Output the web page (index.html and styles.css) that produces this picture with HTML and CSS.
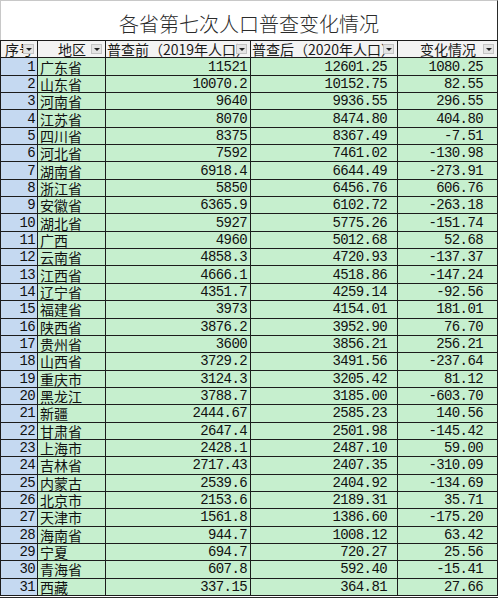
FILE: index.html
```html
<!DOCTYPE html>
<html lang="zh-CN">
<head>
<meta charset="utf-8">
<title>各省第七次人口普查变化情况</title>
<link rel="stylesheet" href="styles.css">
</head>
<body>
<div class="sheet">
  <div class="title">各省第七次人口普查变化情况</div>
  <div class="grid">
    <div class="hd c0 clip">序号<span class="dd"></span></div>
    <div class="hd c1 center">地区<span class="dd"></span></div>
    <div class="hd c2 clip">普查前（2019年人口）<span class="dd"></span></div>
    <div class="hd c3 clip">普查后（2020年人口）<span class="dd"></span></div>
    <div class="hd c4 center">变化情况<span class="dd"></span></div>

    <div class="c0">1</div><div class="c1">广东省</div><div class="c2">11521</div><div class="c3">12601.25</div><div class="c4">1080.25</div>
    <div class="c0">2</div><div class="c1">山东省</div><div class="c2">10070.2</div><div class="c3">10152.75</div><div class="c4">82.55</div>
    <div class="c0">3</div><div class="c1">河南省</div><div class="c2">9640</div><div class="c3">9936.55</div><div class="c4">296.55</div>
    <div class="c0">4</div><div class="c1">江苏省</div><div class="c2">8070</div><div class="c3">8474.80</div><div class="c4">404.80</div>
    <div class="c0">5</div><div class="c1">四川省</div><div class="c2">8375</div><div class="c3">8367.49</div><div class="c4">-7.51</div>
    <div class="c0">6</div><div class="c1">河北省</div><div class="c2">7592</div><div class="c3">7461.02</div><div class="c4">-130.98</div>
    <div class="c0">7</div><div class="c1">湖南省</div><div class="c2">6918.4</div><div class="c3">6644.49</div><div class="c4">-273.91</div>
    <div class="c0">8</div><div class="c1">浙江省</div><div class="c2">5850</div><div class="c3">6456.76</div><div class="c4">606.76</div>
    <div class="c0">9</div><div class="c1">安徽省</div><div class="c2">6365.9</div><div class="c3">6102.72</div><div class="c4">-263.18</div>
    <div class="c0">10</div><div class="c1">湖北省</div><div class="c2">5927</div><div class="c3">5775.26</div><div class="c4">-151.74</div>
    <div class="c0">11</div><div class="c1">广西</div><div class="c2">4960</div><div class="c3">5012.68</div><div class="c4">52.68</div>
    <div class="c0">12</div><div class="c1">云南省</div><div class="c2">4858.3</div><div class="c3">4720.93</div><div class="c4">-137.37</div>
    <div class="c0">13</div><div class="c1">江西省</div><div class="c2">4666.1</div><div class="c3">4518.86</div><div class="c4">-147.24</div>
    <div class="c0">14</div><div class="c1">辽宁省</div><div class="c2">4351.7</div><div class="c3">4259.14</div><div class="c4">-92.56</div>
    <div class="c0">15</div><div class="c1">福建省</div><div class="c2">3973</div><div class="c3">4154.01</div><div class="c4">181.01</div>
    <div class="c0">16</div><div class="c1">陕西省</div><div class="c2">3876.2</div><div class="c3">3952.90</div><div class="c4">76.70</div>
    <div class="c0">17</div><div class="c1">贵州省</div><div class="c2">3600</div><div class="c3">3856.21</div><div class="c4">256.21</div>
    <div class="c0">18</div><div class="c1">山西省</div><div class="c2">3729.2</div><div class="c3">3491.56</div><div class="c4">-237.64</div>
    <div class="c0">19</div><div class="c1">重庆市</div><div class="c2">3124.3</div><div class="c3">3205.42</div><div class="c4">81.12</div>
    <div class="c0">20</div><div class="c1">黑龙江</div><div class="c2">3788.7</div><div class="c3">3185.00</div><div class="c4">-603.70</div>
    <div class="c0">21</div><div class="c1">新疆</div><div class="c2">2444.67</div><div class="c3">2585.23</div><div class="c4">140.56</div>
    <div class="c0">22</div><div class="c1">甘肃省</div><div class="c2">2647.4</div><div class="c3">2501.98</div><div class="c4">-145.42</div>
    <div class="c0">23</div><div class="c1">上海市</div><div class="c2">2428.1</div><div class="c3">2487.10</div><div class="c4">59.00</div>
    <div class="c0">24</div><div class="c1">吉林省</div><div class="c2">2717.43</div><div class="c3">2407.35</div><div class="c4">-310.09</div>
    <div class="c0">25</div><div class="c1">内蒙古</div><div class="c2">2539.6</div><div class="c3">2404.92</div><div class="c4">-134.69</div>
    <div class="c0">26</div><div class="c1">北京市</div><div class="c2">2153.6</div><div class="c3">2189.31</div><div class="c4">35.71</div>
    <div class="c0">27</div><div class="c1">天津市</div><div class="c2">1561.8</div><div class="c3">1386.60</div><div class="c4">-175.20</div>
    <div class="c0">28</div><div class="c1">海南省</div><div class="c2">944.7</div><div class="c3">1008.12</div><div class="c4">63.42</div>
    <div class="c0">29</div><div class="c1">宁夏</div><div class="c2">694.7</div><div class="c3">720.27</div><div class="c4">25.56</div>
    <div class="c0">30</div><div class="c1">青海省</div><div class="c2">607.8</div><div class="c3">592.40</div><div class="c4">-15.41</div>
    <div class="c0">31</div><div class="c1">西藏</div><div class="c2">337.15</div><div class="c3">364.81</div><div class="c4">27.66</div>
  </div>
</div>
</body>
</html>
```
FILE: styles.css
```css
html, body {
  margin: 0;
  padding: 0;
  background: #ffffff;
}

body {
  font-family: "Noto Sans CJK SC", "Noto Sans", sans-serif;
  color: #151515;
}

.sheet {
  width: 498px;
  padding-bottom: 1px;
  border-bottom: 1px solid #2a2a2a;
}

.title {
  height: 40px;
  box-sizing: border-box;
  border-top: 1px solid #c8c8c8;
  border-left: 1px solid #c8c8c8;
  border-right: 1px solid #2a2a2a;
  display: flex;
  align-items: center;
  justify-content: center;
  padding-top: 6px;
  font-size: 20px;
  font-weight: 300;
  color: #2b2b2b;
}

.grid {
  display: grid;
  grid-template-columns: 36px 67px 144px 146px 99px;
  grid-template-rows: repeat(32, 1fr);
  gap: 1px;
  padding: 1px;
  height: 556px;
  box-sizing: border-box;
  background: #1c1c1c;
  font-size: 14px;
}

.grid > div {
  display: flex;
  align-items: center;
  justify-content: flex-end;
  min-width: 0;
  white-space: nowrap;
  line-height: 1;
  background: #c6efce;
  font-family: "Liberation Mono", "DejaVu Sans Mono", monospace;
  letter-spacing: -0.6px;
  color: #111;
}

.grid > .c0 {
  background: #c5d9f1;
  padding-right: 2px;
}

.grid > .c1 {
  justify-content: flex-start;
  padding-left: 2px;
  font-family: "Noto Sans CJK SC", sans-serif;
  letter-spacing: 0;
}

.grid > .c2 { padding-right: 3px; }
.grid > .c3 { padding-right: 10px; }
.grid > .c4 { padding-right: 14px; }

.grid > .hd {
  position: relative;
  background: #f3f3f3;
  justify-content: flex-start;
  padding: 0 0 0 1px;
  color: #1a1a1a;
  font-family: "Noto Sans CJK SC", sans-serif;
  letter-spacing: 0;
}

.grid > .hd.clip {
  overflow: hidden;
}

.grid > .hd.c0 {
  padding-left: 4px;
}

.grid > .hd.center {
  justify-content: center;
}

.dd {
  position: absolute;
  right: 3px;
  top: 50%;
  width: 11px;
  height: 10px;
  margin-top: -5px;
  box-sizing: border-box;
  background: #e4e4e4;
  border: 1px solid #c4c4c4;
}

.dd::after {
  content: "";
  position: absolute;
  left: 2px;
  top: 3px;
  border-left: 3px solid transparent;
  border-right: 3px solid transparent;
  border-top: 3px solid #222;
}
```
